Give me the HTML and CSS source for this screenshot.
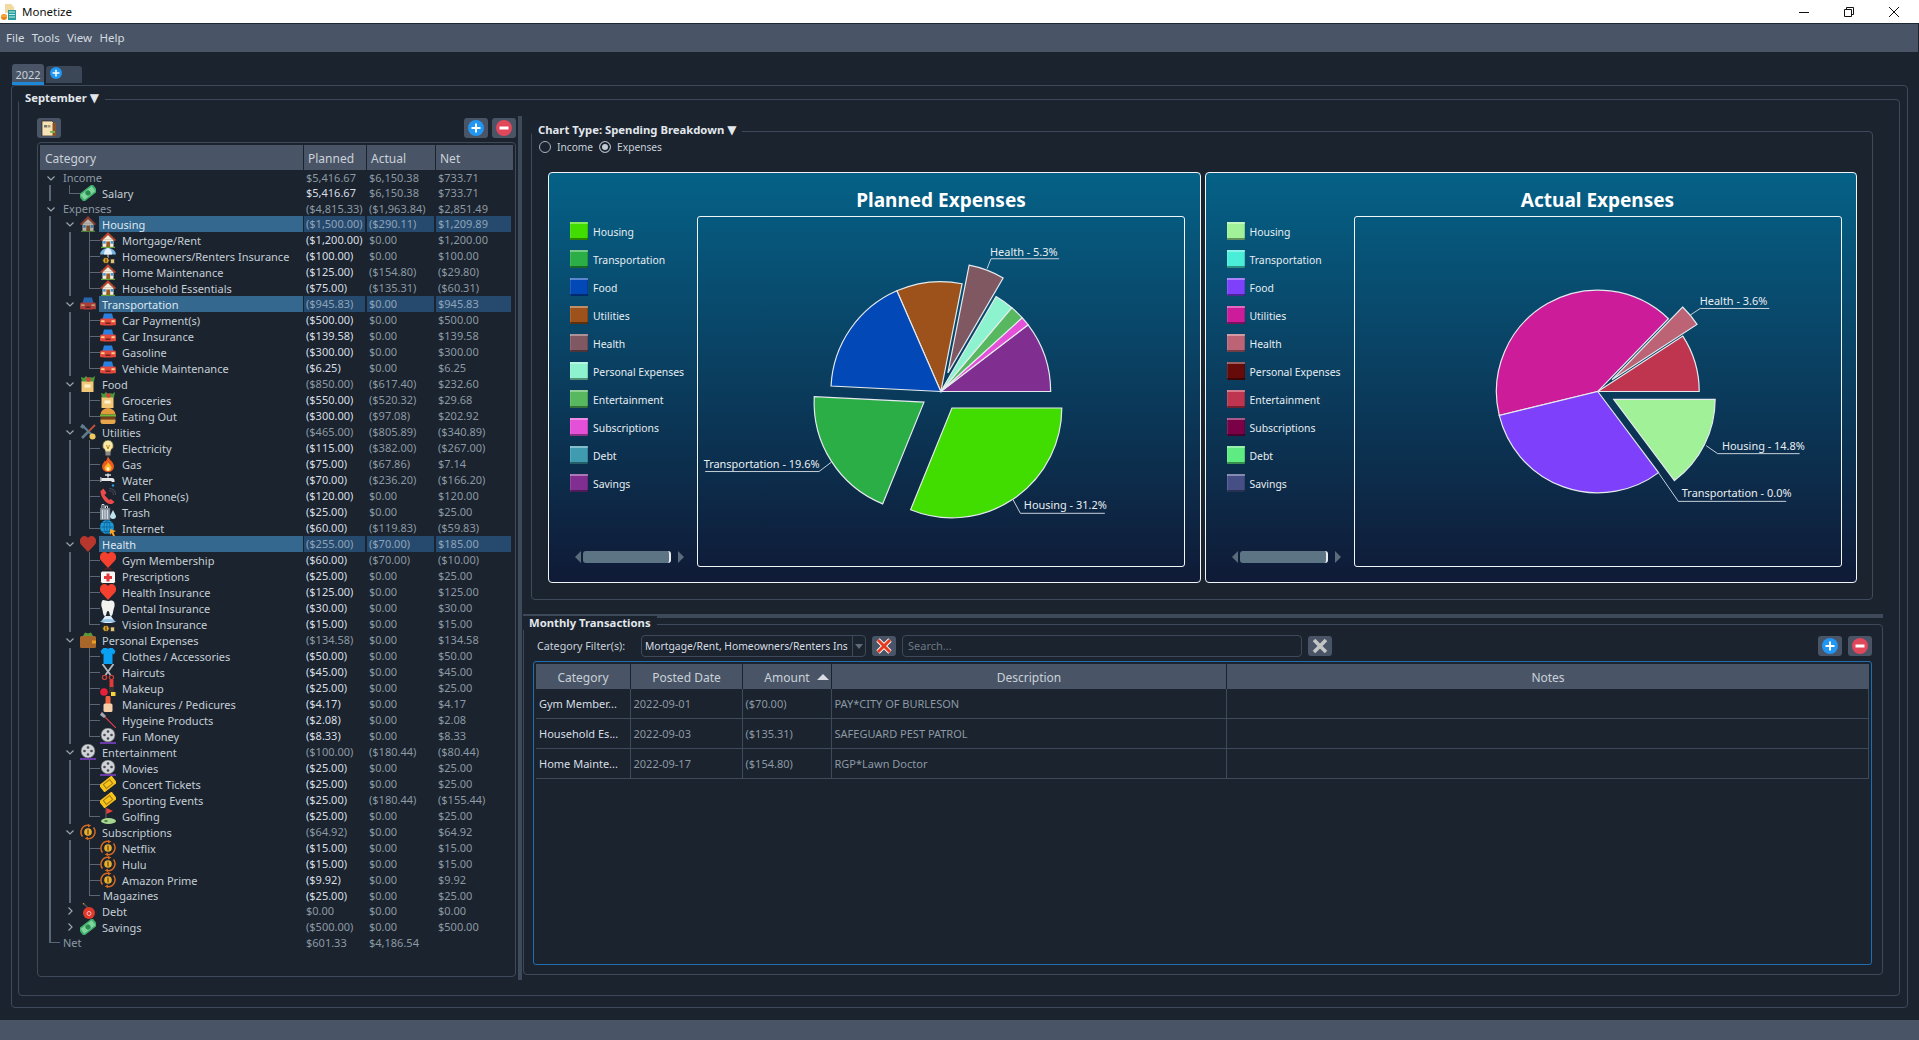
FILE: index.html
```html
<!DOCTYPE html>
<html lang="en">
<head>
<meta charset="utf-8">
<title>Monetize</title>
<link rel="stylesheet" href="styles.css">
</head>
<body>
<svg class="defs" aria-hidden="true">
  <symbol id="i-app" viewBox="0 0 16 16"><path d="M4 0h6l3 3v6H4z" fill="#f2d9a0"/><rect x="7" y="6" width="8" height="10" fill="#2a9c9c"/><path d="M8 8h6M8 10.500h6M8 13h6" stroke="#bfeeee"/><circle cx="3" cy="13" r="3" fill="#e8861c"/><rect x="0" y="11" width="6" height="2" fill="#f5a83a"/></symbol>
  <symbol id="i-file" viewBox="0 0 16 16"><path d="M1 1h10l3 3v12H1z" fill="#f6e4b8" stroke="#2a1c10" stroke-width=".7"/><rect x="11.500" y="3" width="3.500" height="13" fill="#8a5326"/><rect x="3" y="5" width="3" height="2.500" fill="#777"/><rect x="6.500" y="5" width="3" height="2.500" fill="#a89878"/><rect x="9" y="11" width="5" height="1.800" fill="#7ab648"/></symbol>
  <symbol id="i-plus" viewBox="0 0 16 16"><circle cx="8" cy="8" r="8" fill="#2196f3"/><path d="M8 3.500v9M3.500 8h9" stroke="#fff" stroke-width="2"/></symbol>
  <symbol id="i-minus" viewBox="0 0 16 16"><circle cx="8" cy="8" r="8" fill="#e0475a"/><path d="M3.500 8h9" stroke="#fff" stroke-width="3"/></symbol>
  <symbol id="i-down" viewBox="0 0 10 10"><path d="M1.500 3.500L5 7l3.500-3.500" fill="none" stroke="currentColor" stroke-width="1.200"/></symbol>
  <symbol id="i-right" viewBox="0 0 10 10"><path d="M3.500 1.500L7 5 3.500 8.500" fill="none" stroke="currentColor" stroke-width="1.200"/></symbol>
  <symbol id="i-cash" viewBox="0 0 16 16"><g transform="rotate(-38 8 8)"><rect x="-1" y="3.500" width="18" height="9" rx="1" fill="#3fae6a"/><rect x="1" y="5" width="14" height="6" fill="#7fd49c"/><circle cx="8" cy="8" r="2.600" fill="#2a8a50"/></g></symbol>
  <symbol id="i-house" viewBox="0 0 16 16"><path d="M2.500 7.500h11V16h-11z" fill="#f7ecda"/><path d="M8 0L0 8l1.300 1.200L8 3l6.700 6.200L16 8z" fill="#b8452c"/><path d="M8 3l5 4.800H3z" fill="#f7ecda"/><rect x="6.300" y="9.500" width="3.800" height="6.500" fill="#9a5a22"/><rect x="3.200" y="9" width="2.500" height="2.800" fill="#4a9ad8"/><rect x="10.600" y="9" width="2.500" height="2.800" fill="#4a9ad8"/><rect x="1" y="14.800" width="14" height="1.200" fill="#5fa03a"/></symbol>
  <symbol id="i-insure" viewBox="0 0 16 16"><path d="M0 6.500a8 6.500 0 0 1 16 0z" fill="#7ab4e0"/><path d="M4 6.500a4 6.500 0 0 1 8 0z" fill="#e6f2fb"/><path d="M8 6v5" stroke="#ddd"/><circle cx="6" cy="12.500" r="3.300" fill="#e0a82a" stroke="#222"/><path d="M6 10.500v4" stroke="#222"/><rect x="10.500" y="11" width="4" height="4.500" fill="#e0c27a" stroke="#222" stroke-width=".6"/></symbol>
  <symbol id="i-car" viewBox="0 0 16 16"><path d="M2.500 7L4 1.500h8L13.500 7z" fill="#2a80e0"/><rect x="0" y="6.500" width="16" height="7" rx="1.500" fill="#e2483e"/><rect x="1.200" y="8.300" width="3.300" height="1.800" fill="#ffd98a"/><rect x="11.500" y="8.300" width="3.300" height="1.800" fill="#ffd98a"/><rect x="5.500" y="10.500" width="5" height="1.500" fill="#7a1f1a"/><rect x=".5" y="13.500" width="3" height="1.500" fill="#222"/><rect x="12.500" y="13.500" width="3" height="1.500" fill="#222"/></symbol>
  <symbol id="i-bag" viewBox="0 0 16 16"><rect x="1.500" y="5" width="12" height="11" fill="#f2c878"/><path d="M2 5.500L1 1l3 1 2-2 2 2 3-1 1 1 3-2-1 5.500z" fill="#4e9a3a"/><circle cx="8.500" cy="3.500" r="2.200" fill="#d8413a"/><rect x="4.500" y="8.500" width="6" height="3" fill="#fff2cc"/></symbol>
  <symbol id="i-burger" viewBox="0 0 16 16"><path d="M.5 6.500a7.500 6.500 0 0 1 15 0z" fill="#e29a3a"/><rect x="0" y="6.500" width="16" height="2.200" fill="#6fb83a"/><rect x=".5" y="8.700" width="15" height="2.800" fill="#7a3f1a"/><path d="M.5 11.500h15v2a2.500 2.500 0 0 1-2.500 2.500H3a2.500 2.500 0 0 1-2.500-2.500z" fill="#e8a64a"/></symbol>
  <symbol id="i-tools" viewBox="0 0 16 16"><path d="M2 1l13 13" stroke="#5e7c8c" stroke-width="2.400"/><path d="M15 1L9 7" stroke="#c0503c" stroke-width="1.800"/><path d="M9 7l-7 7" stroke="#5e7c8c" stroke-width="2.600"/><circle cx="12.500" cy="12.500" r="3" fill="#f0c860"/><path d="M0 3l2-3 3 2-2 3z" fill="#5e7c8c"/></symbol>
  <symbol id="i-bulb" viewBox="0 0 16 16"><path d="M8 0a5.500 5.500 0 0 1 3 10v2H5v-2a5.500 5.500 0 0 1 3-10z" fill="#f7e9a8" stroke="#3a3a2a" stroke-width=".7"/><path d="M6.500 5l1.500 4 1.500-4" fill="none" stroke="#c08a20"/><rect x="5.500" y="12" width="5" height="3.500" fill="#8a8a8a"/></symbol>
  <symbol id="i-flame" viewBox="0 0 16 16"><path d="M8 0c1 4 6 6 6 10.500A6 5.500 0 0 1 2 10.500C2 8 4 7 4.500 5 6 6 7 3.500 8 0z" fill="#ee5a1c"/><path d="M8 6c.5 2 3.500 3 3.500 5.500a3.500 3.500 0 0 1-7 0C4.500 10 7 9 8 6z" fill="#fdb62c"/><ellipse cx="8" cy="13" rx="1.600" ry="2" fill="#fff6d0"/></symbol>
  <symbol id="i-tap" viewBox="0 0 16 16"><path d="M5 3h6M8 1.500v4" stroke="#ddd" stroke-width="1.500"/><path d="M0 6h12a2.500 2.500 0 0 1 2.500 2.500v1.500h-3V9H0z" fill="#e8e8e8"/><rect x="0" y="5" width="1.500" height="5" fill="#999"/><circle cx="13" cy="13.500" r="1.200" fill="#2a9ae0"/></symbol>
  <symbol id="i-phone" viewBox="0 0 16 16"><path d="M.5 3l3-2.500 3 4.500-2 2 4.500 5 2-1 3.500 3-3 2.500C6 16 .5 9 .5 3z" fill="#ea4a48"/><path d="M9 2.500a4.500 4.500 0 0 1 4.500 4.500M9 .3a6.700 6.700 0 0 1 6.700 6.700" fill="none" stroke="#445" stroke-width="1.100"/></symbol>
  <symbol id="i-trash" viewBox="0 0 16 16"><rect x="0" y="4" width="10" height="12" fill="#8d99a6" stroke="#50606e" stroke-width=".6"/><path d="M2 4V.5h2V4M5.500 4V2h2v2M2.500 6v9M5 6v9M7.500 6v9" stroke="#d8dde2"/><path d="M13 6l3 6a3 3 0 0 1-6 0z" fill="#bfe4ee"/></symbol>
  <symbol id="i-globe" viewBox="0 0 16 16"><circle cx="7" cy="7" r="7" fill="#1f9ad8"/><path d="M0 7h14M7 0v14M2 2.500h10M2 11.500h10M7 0c-4 4-4 10 0 14M7 0c4 4 4 10 0 14" fill="none" stroke="#0b5d8e" stroke-width=".7"/><path d="M10 9l6 2-2.500 1.200L15 16h-2l-1.500-3L10 15z" fill="#f7a428"/></symbol>
  <symbol id="i-heart" viewBox="0 0 16 16"><path d="M8 16L1 8.500C-1.500 5 .5 0 4.500 0 6 0 7.300.8 8 2c.7-1.200 2-2 3.500-2 4 0 6 5 3.500 8.500z" fill="#f4402e"/></symbol>
  <symbol id="i-aid" viewBox="0 0 16 16"><path d="M5 3V.8h6V3" fill="none" stroke="#6a2020"/><rect x=".5" y="3" width="15" height="12.500" rx="2" fill="#f8f8f8" stroke="#222"/><path d="M8 5.500v8M4 9.500h8" stroke="#e5383a" stroke-width="3"/></symbol>
  <symbol id="i-tooth" viewBox="0 0 16 16"><path d="M3 0c2 0 3 1 5 1s3-1 5 0c2 1 2 5 1 7-1 3-1 8-3 8s-1-5-3-5-1 5-3 5-2-5-3-8C1 6 1 1 3 0z" fill="#f2f2ee"/></symbol>
  <symbol id="i-vision" viewBox="0 0 16 16"><path d="M1 6L5 0h6l4 6-4 1H5z" fill="#d9ecf7"/><path d="M0 6a8 3 0 0 1 16 0z" fill="#7ab4e0" opacity=".7"/><circle cx="6" cy="12.500" r="3.300" fill="#e0a82a" stroke="#222"/><path d="M6 10.500v4" stroke="#222"/><rect x="10.500" y="11" width="4" height="4.500" fill="#e0c27a" stroke="#222" stroke-width=".6"/></symbol>
  <symbol id="i-wallet" viewBox="0 0 16 16"><path d="M3 4l2-3.500 3 1 3-1L13 4z" fill="#5a9a3a"/><rect x="0" y="4" width="16" height="12" rx="1.500" fill="#a8662a"/><rect x="12" y="8.500" width="4" height="3" fill="#f0a020"/></symbol>
  <symbol id="i-shirt" viewBox="0 0 16 16"><path d="M3.500 0h3c.5 1 2.500 1 3 0h3l3 3-1.500 3.500L12.500 5.500V16h-9V5.500L2 6.500.5 3z" fill="#0aa2f2"/></symbol>
  <symbol id="i-scissors" viewBox="0 0 16 16"><path d="M2.500 0l8 11M13.500 0l-8 11" stroke="#b4bac0" stroke-width="1.800"/><circle cx="4.500" cy="13.500" r="2.100" fill="none" stroke="#c8403a" stroke-width="1.300"/><circle cx="11.500" cy="13.500" r="2.100" fill="none" stroke="#c8403a" stroke-width="1.300"/></symbol>
  <symbol id="i-makeup" viewBox="0 0 16 16"><rect x="9.500" y="0" width="4" height="7" fill="#e03a3a"/><rect x="9" y="7" width="5" height="6" fill="#333"/><circle cx="4" cy="12" r="3.800" fill="#e8203a"/><rect x="11" y="12" width="4.500" height="4" fill="#f7d23a"/></symbol>
  <symbol id="i-nail" viewBox="0 0 16 16"><path d="M5.500 2a2.500 2.500 0 0 1 5 0v6h-5z" fill="#f0603a"/><rect x="3.500" y="7.500" width="9" height="8.500" rx="1.500" fill="#f7cfa8"/></symbol>
  <symbol id="i-brush" viewBox="0 0 16 16"><path d="M1 1l15 15" stroke="#d8404a" stroke-width="1.200"/><path d="M0 3l2-3 4 4-2 2z" fill="#a0a8b0"/></symbol>
  <symbol id="i-reel" viewBox="0 0 16 16"><circle cx="8" cy="7" r="7" fill="#cfd3d7" stroke="#555" stroke-width=".6"/><circle cx="8" cy="3.500" r="1.300" fill="#4a4a52"/><circle cx="8" cy="10.500" r="1.300" fill="#4a4a52"/><circle cx="4.500" cy="7" r="1.300" fill="#4a4a52"/><circle cx="11.500" cy="7" r="1.300" fill="#4a4a52"/><rect x="0" y="14" width="16" height="2" fill="#6a3aa8"/></symbol>
  <symbol id="i-ticket" viewBox="0 0 16 16"><g transform="rotate(-38 8 8)"><rect x="0" y="3.500" width="16" height="9" fill="#f7c41c"/><rect x="4" y="5.500" width="8" height="5" fill="none" stroke="#a87a10"/></g></symbol>
  <symbol id="i-golf" viewBox="0 0 16 16"><path d="M6 0v12" stroke="#666"/><path d="M6.500 0l6.500 3-6.500 3z" fill="#e8403a"/><ellipse cx="8.500" cy="13" rx="7.500" ry="3" fill="#a8d890"/><ellipse cx="6" cy="13" rx="1.800" ry=".8" fill="#2a5a2a"/></symbol>
  <symbol id="i-sub" viewBox="0 0 16 16"><path d="M2.500 12.500A7 7 0 0 1 8.500 1.200M13.500 3.500a7 7 0 0 1-6 11.300" fill="none" stroke="#d8691e" stroke-width="1.500"/><path d="M8 0l3.300 1.600L8 3.500zM8 16l-3.300-1.600L8 12.500z" fill="#d8691e"/><circle cx="8" cy="8" r="3.800" fill="#e8b030"/><rect x="7.400" y="5.500" width="1.200" height="5" fill="#6a4208"/></symbol>
  <symbol id="i-bomb" viewBox="0 0 16 16"><path d="M8 5L4 1" stroke="#555" stroke-width="1.200"/><circle cx="3.500" cy=".8" r=".8" fill="#e8a020"/><circle cx="9" cy="10" r="6" fill="#e0392c"/><circle cx="9" cy="10.500" r="2" fill="none" stroke="#f6c0b8"/></symbol>
  <symbol id="i-x" viewBox="0 0 16 16"><path d="M2 2l12 12M14 2L2 14" stroke="#fff" stroke-width="4.600"/><path d="M2 2l12 12M14 2L2 14" stroke="#e63a20" stroke-width="3"/></symbol>
  <symbol id="i-xg" viewBox="0 0 16 16"><path d="M2 2l12 12M14 2L2 14" stroke="#c4c4c4" stroke-width="3.600"/></symbol>
</svg>

<header class="titlebar">
  <svg class="app-ic"><use href="#i-app"/></svg>
  <span class="app-name">Monetize</span>
  <div class="winctl">
    <svg class="wc" viewBox="0 0 10 10"><path d="M0 5.500h10"/></svg>
    <svg class="wc" viewBox="0 0 10 10"><path d="M.5 2.500h7v7h-7zM2.500 2.500v-2h7v7h-2"/></svg>
    <svg class="wc" viewBox="0 0 10 10"><path d="M0 0l10 10M10 0L0 10"/></svg>
  </div>
</header>
<nav class="menubar"><span>File</span><span>Tools</span><span>View</span><span>Help</span></nav>

<main class="main">
  <div class="tabs">
    <div class="tab active">2022</div>
    <div class="tab add"><svg class="tab-ic"><use href="#i-plus"/></svg></div>
  </div>
  <div class="frame-outer">
    <section class="frame-month">
      <div class="caption cap-month">September <span class="tri">▼</span></div>

      <div class="left">
        <div class="toolbar">
          <button class="btn"><svg class="btn-ic"><use href="#i-file"/></svg></button>
          <span class="spring"></span>
          <button class="btn"><svg class="btn-ic"><use href="#i-plus"/></svg></button>
          <button class="btn"><svg class="btn-ic"><use href="#i-minus"/></svg></button>
        </div>
        <div class="tree">
          <div class="tree-head"><div>Category</div><div>Planned</div><div>Actual</div><div>Net</div></div>

          <div class="row root"><div class="cat"><svg class="ch"><use href="#i-down"/></svg><span>Income</span></div><div class="v">$5,416.67</div><div class="v">$6,150.38</div><div class="v">$733.71</div></div>
          <div class="row top t-salary"><div class="cat"><svg class="ic"><use href="#i-cash"/></svg><span>Salary</span></div><div class="v hi">$5,416.67</div><div class="v">$6,150.38</div><div class="v">$733.71</div></div>
          <div class="row root"><div class="cat"><svg class="ch"><use href="#i-down"/></svg><span>Expenses</span></div><div class="v">($4,815.33)</div><div class="v">($1,963.84)</div><div class="v">$2,851.49</div></div>

          <div class="row parent sel"><div class="cat"><svg class="ch"><use href="#i-down"/></svg><svg class="ic dim"><use href="#i-house"/></svg><span class="lbl">Housing</span></div><div class="v">($1,500.00)</div><div class="v">($290.11)</div><div class="v">$1,209.89</div></div>
          <div class="row child"><div class="cat"><svg class="ic"><use href="#i-house"/></svg><span>Mortgage/Rent</span></div><div class="v hi">($1,200.00)</div><div class="v">$0.00</div><div class="v">$1,200.00</div></div>
          <div class="row child"><div class="cat"><svg class="ic"><use href="#i-insure"/></svg><span>Homeowners/Renters Insurance</span></div><div class="v hi">($100.00)</div><div class="v">$0.00</div><div class="v">$100.00</div></div>
          <div class="row child"><div class="cat"><svg class="ic"><use href="#i-house"/></svg><span>Home Maintenance</span></div><div class="v hi">($125.00)</div><div class="v">($154.80)</div><div class="v">($29.80)</div></div>
          <div class="row child last"><div class="cat"><svg class="ic"><use href="#i-house"/></svg><span>Household Essentials</span></div><div class="v hi">($75.00)</div><div class="v">($135.31)</div><div class="v">($60.31)</div></div>

          <div class="row parent sel"><div class="cat"><svg class="ch"><use href="#i-down"/></svg><svg class="ic dim"><use href="#i-car"/></svg><span class="lbl">Transportation</span></div><div class="v">($945.83)</div><div class="v">$0.00</div><div class="v">$945.83</div></div>
          <div class="row child"><div class="cat"><svg class="ic"><use href="#i-car"/></svg><span>Car Payment(s)</span></div><div class="v hi">($500.00)</div><div class="v">$0.00</div><div class="v">$500.00</div></div>
          <div class="row child"><div class="cat"><svg class="ic"><use href="#i-car"/></svg><span>Car Insurance</span></div><div class="v hi">($139.58)</div><div class="v">$0.00</div><div class="v">$139.58</div></div>
          <div class="row child"><div class="cat"><svg class="ic"><use href="#i-car"/></svg><span>Gasoline</span></div><div class="v hi">($300.00)</div><div class="v">$0.00</div><div class="v">$300.00</div></div>
          <div class="row child last"><div class="cat"><svg class="ic"><use href="#i-car"/></svg><span>Vehicle Maintenance</span></div><div class="v hi">($6.25)</div><div class="v">$0.00</div><div class="v">$6.25</div></div>

          <div class="row parent"><div class="cat"><svg class="ch"><use href="#i-down"/></svg><svg class="ic"><use href="#i-bag"/></svg><span class="lbl">Food</span></div><div class="v">($850.00)</div><div class="v">($617.40)</div><div class="v">$232.60</div></div>
          <div class="row child"><div class="cat"><svg class="ic"><use href="#i-bag"/></svg><span>Groceries</span></div><div class="v hi">($550.00)</div><div class="v">($520.32)</div><div class="v">$29.68</div></div>
          <div class="row child last"><div class="cat"><svg class="ic"><use href="#i-burger"/></svg><span>Eating Out</span></div><div class="v hi">($300.00)</div><div class="v">($97.08)</div><div class="v">$202.92</div></div>

          <div class="row parent"><div class="cat"><svg class="ch"><use href="#i-down"/></svg><svg class="ic"><use href="#i-tools"/></svg><span class="lbl">Utilities</span></div><div class="v">($465.00)</div><div class="v">($805.89)</div><div class="v">($340.89)</div></div>
          <div class="row child"><div class="cat"><svg class="ic"><use href="#i-bulb"/></svg><span>Electricity</span></div><div class="v hi">($115.00)</div><div class="v">($382.00)</div><div class="v">($267.00)</div></div>
          <div class="row child"><div class="cat"><svg class="ic"><use href="#i-flame"/></svg><span>Gas</span></div><div class="v hi">($75.00)</div><div class="v">($67.86)</div><div class="v">$7.14</div></div>
          <div class="row child"><div class="cat"><svg class="ic"><use href="#i-tap"/></svg><span>Water</span></div><div class="v hi">($70.00)</div><div class="v">($236.20)</div><div class="v">($166.20)</div></div>
          <div class="row child"><div class="cat"><svg class="ic"><use href="#i-phone"/></svg><span>Cell Phone(s)</span></div><div class="v hi">($120.00)</div><div class="v">$0.00</div><div class="v">$120.00</div></div>
          <div class="row child"><div class="cat"><svg class="ic"><use href="#i-trash"/></svg><span>Trash</span></div><div class="v hi">($25.00)</div><div class="v">$0.00</div><div class="v">$25.00</div></div>
          <div class="row child last"><div class="cat"><svg class="ic"><use href="#i-globe"/></svg><span>Internet</span></div><div class="v hi">($60.00)</div><div class="v">($119.83)</div><div class="v">($59.83)</div></div>

          <div class="row parent sel"><div class="cat"><svg class="ch"><use href="#i-down"/></svg><svg class="ic dim"><use href="#i-heart"/></svg><span class="lbl">Health</span></div><div class="v">($255.00)</div><div class="v">($70.00)</div><div class="v">$185.00</div></div>
          <div class="row child"><div class="cat"><svg class="ic"><use href="#i-heart"/></svg><span>Gym Membership</span></div><div class="v hi">($60.00)</div><div class="v">($70.00)</div><div class="v">($10.00)</div></div>
          <div class="row child"><div class="cat"><svg class="ic"><use href="#i-aid"/></svg><span>Prescriptions</span></div><div class="v hi">($25.00)</div><div class="v">$0.00</div><div class="v">$25.00</div></div>
          <div class="row child"><div class="cat"><svg class="ic"><use href="#i-heart"/></svg><span>Health Insurance</span></div><div class="v hi">($125.00)</div><div class="v">$0.00</div><div class="v">$125.00</div></div>
          <div class="row child"><div class="cat"><svg class="ic"><use href="#i-tooth"/></svg><span>Dental Insurance</span></div><div class="v hi">($30.00)</div><div class="v">$0.00</div><div class="v">$30.00</div></div>
          <div class="row child last"><div class="cat"><svg class="ic"><use href="#i-vision"/></svg><span>Vision Insurance</span></div><div class="v hi">($15.00)</div><div class="v">$0.00</div><div class="v">$15.00</div></div>

          <div class="row parent"><div class="cat"><svg class="ch"><use href="#i-down"/></svg><svg class="ic"><use href="#i-wallet"/></svg><span class="lbl">Personal Expenses</span></div><div class="v">($134.58)</div><div class="v">$0.00</div><div class="v">$134.58</div></div>
          <div class="row child"><div class="cat"><svg class="ic"><use href="#i-shirt"/></svg><span>Clothes / Accessories</span></div><div class="v hi">($50.00)</div><div class="v">$0.00</div><div class="v">$50.00</div></div>
          <div class="row child"><div class="cat"><svg class="ic"><use href="#i-scissors"/></svg><span>Haircuts</span></div><div class="v hi">($45.00)</div><div class="v">$0.00</div><div class="v">$45.00</div></div>
          <div class="row child"><div class="cat"><svg class="ic"><use href="#i-makeup"/></svg><span>Makeup</span></div><div class="v hi">($25.00)</div><div class="v">$0.00</div><div class="v">$25.00</div></div>
          <div class="row child"><div class="cat"><svg class="ic"><use href="#i-nail"/></svg><span>Manicures / Pedicures</span></div><div class="v hi">($4.17)</div><div class="v">$0.00</div><div class="v">$4.17</div></div>
          <div class="row child"><div class="cat"><svg class="ic"><use href="#i-brush"/></svg><span>Hygeine Products</span></div><div class="v hi">($2.08)</div><div class="v">$0.00</div><div class="v">$2.08</div></div>
          <div class="row child last"><div class="cat"><svg class="ic"><use href="#i-reel"/></svg><span>Fun Money</span></div><div class="v hi">($8.33)</div><div class="v">$0.00</div><div class="v">$8.33</div></div>

          <div class="row parent"><div class="cat"><svg class="ch"><use href="#i-down"/></svg><svg class="ic"><use href="#i-reel"/></svg><span class="lbl">Entertainment</span></div><div class="v">($100.00)</div><div class="v">($180.44)</div><div class="v">($80.44)</div></div>
          <div class="row child"><div class="cat"><svg class="ic"><use href="#i-reel"/></svg><span>Movies</span></div><div class="v hi">($25.00)</div><div class="v">$0.00</div><div class="v">$25.00</div></div>
          <div class="row child"><div class="cat"><svg class="ic"><use href="#i-ticket"/></svg><span>Concert Tickets</span></div><div class="v hi">($25.00)</div><div class="v">$0.00</div><div class="v">$25.00</div></div>
          <div class="row child"><div class="cat"><svg class="ic"><use href="#i-ticket"/></svg><span>Sporting Events</span></div><div class="v hi">($25.00)</div><div class="v">($180.44)</div><div class="v">($155.44)</div></div>
          <div class="row child last"><div class="cat"><svg class="ic"><use href="#i-golf"/></svg><span>Golfing</span></div><div class="v hi">($25.00)</div><div class="v">$0.00</div><div class="v">$25.00</div></div>

          <div class="row parent"><div class="cat"><svg class="ch"><use href="#i-down"/></svg><svg class="ic"><use href="#i-sub"/></svg><span class="lbl">Subscriptions</span></div><div class="v">($64.92)</div><div class="v">$0.00</div><div class="v">$64.92</div></div>
          <div class="row child"><div class="cat"><svg class="ic"><use href="#i-sub"/></svg><span>Netflix</span></div><div class="v hi">($15.00)</div><div class="v">$0.00</div><div class="v">$15.00</div></div>
          <div class="row child"><div class="cat"><svg class="ic"><use href="#i-sub"/></svg><span>Hulu</span></div><div class="v hi">($15.00)</div><div class="v">$0.00</div><div class="v">$15.00</div></div>
          <div class="row child"><div class="cat"><svg class="ic"><use href="#i-sub"/></svg><span>Amazon Prime</span></div><div class="v hi">($9.92)</div><div class="v">$0.00</div><div class="v">$9.92</div></div>
          <div class="row child last bare"><div class="cat"><span>Magazines</span></div><div class="v hi">($25.00)</div><div class="v">$0.00</div><div class="v">$25.00</div></div>

          <div class="row parent"><div class="cat"><svg class="ch"><use href="#i-right"/></svg><svg class="ic"><use href="#i-bomb"/></svg><span class="lbl">Debt</span></div><div class="v">$0.00</div><div class="v">$0.00</div><div class="v">$0.00</div></div>
          <div class="row parent"><div class="cat"><svg class="ch"><use href="#i-right"/></svg><svg class="ic"><use href="#i-cash"/></svg><span class="lbl">Savings</span></div><div class="v">($500.00)</div><div class="v">$0.00</div><div class="v">$500.00</div></div>
          <div class="row root net"><div class="cat"><span>Net</span></div><div class="v">$601.33</div><div class="v">$4,186.54</div><div class="v"></div></div>
        </div>
      </div>

      <div class="split-v"></div>

      <div class="right">
        <section class="frame-chart">
          <div class="caption cap-chart">Chart Type: Spending Breakdown <span class="tri">▼</span></div>
          <div class="radios">
            <span class="radio"></span><span class="radio-text">Income</span>
            <span class="radio on"></span><span class="radio-text">Expenses</span>
          </div>
          <div class="cards">

            <article class="card">
              <div class="legend">
                <div class="lg"><span class="sw s-a1"></span>Housing</div>
                <div class="lg"><span class="sw s-a2"></span>Transportation</div>
                <div class="lg"><span class="sw s-a3"></span>Food</div>
                <div class="lg"><span class="sw s-a4"></span>Utilities</div>
                <div class="lg"><span class="sw s-a5"></span>Health</div>
                <div class="lg"><span class="sw s-a6"></span>Personal Expenses</div>
                <div class="lg"><span class="sw s-a7"></span>Entertainment</div>
                <div class="lg"><span class="sw s-a8"></span>Subscriptions</div>
                <div class="lg"><span class="sw s-a9"></span>Debt</div>
                <div class="lg"><span class="sw s-a10"></span>Savings</div>
                <div class="lscroll"><i class="arrow-l"></i><i class="thumb"></i><i class="arrow-r"></i></div>
              </div>
              <div class="plotcol">
                <h2 class="chart-title">Planned Expenses</h2>
                <svg class="plot" viewBox="-243.800 -175.500 488 351">
                  <g class="slices">
                    <path fill="#802f90" d="M0 0L87.800 -67.100A110.500 110.500 0 0 1 110.500 0Z"/>
                    <path fill="#e550d8" d="M0 0L81.800 -74.200A110.500 110.500 0 0 1 87.800 -67.100Z"/>
                    <path fill="#57b860" d="M0 0L71.400 -84.300A110.500 110.500 0 0 1 81.800 -74.200Z"/>
                    <path fill="#8df2ce" d="M0 0L55.600 -95.500A110.500 110.500 0 0 1 71.400 -84.300Z"/>
                    <path fill="#805862" d="M7.100 -18.700L28.500 -127.100A110.500 110.500 0 0 1 62.700 -114.200Z"/>
                    <path fill="#9c521a" d="M0 0L-44.200 -101.300A110.500 110.500 0 0 1 21.400 -108.400Z"/>
                    <path fill="#0348b7" d="M0 0L-110.400 -5.500A110.500 110.500 0 0 1 -44.200 -101.300Z"/>
                    <path fill="#2aae45" d="M-16.900 10.700L-58.500 113A110.500 110.500 0 0 1 -127.300 5.200Z"/>
                    <path fill="#41dc00" d="M11.200 16.600L121.700 16.600A110.500 110.500 0 0 1 -30.400 118.900Z"/>
                  </g>
                  <path class="leader" d="M46.500 -123.500L50.500 -133.500H119"/>
                  <path class="leader" d="M-237 80.500H-122.500L-110 71"/>
                  <path class="leader" d="M72.500 108.500L80 122.500H165"/>
                  <text class="plabel" x="49.500" y="-136.500">Health - 5.3%</text>
                  <text class="plabel" x="-238.500" y="76.500">Transportation - 19.6%</text>
                  <text class="plabel" x="83.500" y="118.500">Housing - 31.2%</text>
                </svg>
              </div>
            </article>

            <article class="card">
              <div class="legend">
                <div class="lg"><span class="sw s-b1"></span>Housing</div>
                <div class="lg"><span class="sw s-b2"></span>Transportation</div>
                <div class="lg"><span class="sw s-b3"></span>Food</div>
                <div class="lg"><span class="sw s-b4"></span>Utilities</div>
                <div class="lg"><span class="sw s-b5"></span>Health</div>
                <div class="lg"><span class="sw s-b6"></span>Personal Expenses</div>
                <div class="lg"><span class="sw s-b7"></span>Entertainment</div>
                <div class="lg"><span class="sw s-b8"></span>Subscriptions</div>
                <div class="lg"><span class="sw s-b9"></span>Debt</div>
                <div class="lg"><span class="sw s-b10"></span>Savings</div>
                <div class="lscroll"><i class="arrow-l"></i><i class="thumb"></i><i class="arrow-r"></i></div>
              </div>
              <div class="plotcol">
                <h2 class="chart-title">Actual Expenses</h2>
                <svg class="plot" viewBox="-243.800 -175.500 488 351">
                  <g class="slices">
                    <path fill="#bf344f" d="M0 0L85.500 -55.700A102 102 0 0 1 102 0Z"/>
                    <path fill="#bc6476" d="M14.300 -11.800L85.300 -85A102 102 0 0 1 99.800 -67.500Z"/>
                    <path fill="#cd1c9a" d="M0 0L-99.100 24.100A102 102 0 0 1 71 -73.200Z"/>
                    <path fill="#7f40fb" d="M0 0L61.100 81.600A102 102 0 0 1 -99.100 24.100Z"/>
                    <path fill="#a0f198" d="M16 8L118 8A102 102 0 0 1 77.100 89.600Z"/>
                  </g>
                  <path class="leader" d="M92.500 -76.500L103 -83.500H172.500"/>
                  <path class="leader" d="M109 54.500L120.500 62.500H203"/>
                  <path class="leader" d="M60.500 81L81 110.500H189.500"/>
                  <text class="plabel" x="102.500" y="-87.500">Health - 3.6%</text>
                  <text class="plabel" x="124.800" y="58.500">Housing - 14.8%</text>
                  <text class="plabel" x="84.500" y="106.500">Transportation - 0.0%</text>
                </svg>
              </div>
            </article>

          </div>
        </section>

        <div class="split-h"></div>

        <section class="frame-tx">
          <div class="caption cap-tx">Monthly Transactions</div>
          <div class="filter">
            <label class="filter-label">Category Filter(s):</label>
            <div class="combo"><span class="combo-text">Mortgage/Rent, Homeowners/Renters Ins</span><span class="combo-btn"><i></i></span></div>
            <button class="btn"><svg class="btn-ic"><use href="#i-x"/></svg></button>
            <div class="search">Search...</div>
            <button class="btn"><svg class="btn-ic"><use href="#i-xg"/></svg></button>
            <span class="spring"></span>
            <button class="btn"><svg class="btn-ic"><use href="#i-plus"/></svg></button>
            <button class="btn"><svg class="btn-ic"><use href="#i-minus"/></svg></button>
          </div>
          <div class="table">
            <div class="thead">
              <div>Category</div><div>Posted Date</div><div class="sorted">Amount<i class="sort"></i></div><div>Description</div><div>Notes</div>
            </div>
            <div class="tr"><div class="strong">Gym Member...</div><div>2022-09-01</div><div>($70.00)</div><div>PAY*CITY OF BURLESON</div><div></div></div>
            <div class="tr"><div class="strong">Household Es...</div><div>2022-09-03</div><div>($135.31)</div><div>SAFEGUARD PEST PATROL</div><div></div></div>
            <div class="tr"><div class="strong">Home Mainte...</div><div>2022-09-17</div><div>($154.80)</div><div>RGP*Lawn Doctor</div><div></div></div>
          </div>
        </section>
      </div>
    </section>
  </div>
</main>
<footer class="statusbar"></footer>
</body>
</html>
```

FILE: styles.css
```css
* { box-sizing: border-box; }
html, body { margin: 0; height: 1040px; }
body {
  width: 1919px;
  overflow: hidden;
  display: flex;
  flex-direction: column;
  background: #1a232e;
  color: #c9d1d9;
  font: 11px/1 "Noto Sans", "Liberation Sans", sans-serif;
}
.defs { position: absolute; width: 0; height: 0; }
button { border: 0; padding: 0; font: inherit; }

.titlebar {
  flex: none;
  height: 24px;
  background: #fff;
  border-bottom: 1px solid #1f2933;
  display: flex;
  align-items: center;
  color: #111;
  font-size: 11.500px;
  padding-left: 1px;
}
.app-ic { width: 16px; height: 16px; margin-right: 5px; }
.winctl { margin-left: auto; display: flex; gap: 35px; padding-right: 20px; }
.wc { width: 10px; height: 10px; fill: none; stroke: #111; stroke-width: 1; }

.menubar {
  flex: none;
  height: 28px;
  background: #495566;
  display: flex;
  align-items: center;
  gap: 7.300px;
  padding-left: 6px;
  color: #d5dbe1;
  font-size: 11.500px;
  border-right: 1px solid #1a232e;
}

.main { flex: none; height: 968px; padding: 12px 11px 0 11px; display: flex; flex-direction: column; }
.tabs { display: flex; height: 21px; padding-left: 1px; align-items: flex-start; gap: 2px; flex: none; }
.tab { border-radius: 3px 3px 0 0; background: #495566; }
.tab.active { width: 32px; height: 21px; border-bottom: 3px solid #1e88d8; display: flex; align-items: center; justify-content: center; color: #c9d1d9; padding-top: 2px; }
.tab.add { width: 36px; height: 17px; margin-top: 2px; background: #3b4757; padding: 1px 0 0 4px; }
.tab-ic { width: 12px; height: 12px; display: block; }

.frame-outer { flex: none; height: 923px; border: 1px solid #3e4a5a; border-radius: 4px; padding: 13px 7px 11px 6px; }
.frame-month { position: relative; height: 100%; border: 1px solid #3e4a5a; border-radius: 4px; padding: 16px 15px 15px 18px; display: flex; }
.caption { position: absolute; background: #1a232e; padding: 0 6px; font-weight: 700; color: #e2e7ec; line-height: 14px; font-size: 11.300px; white-space: nowrap; }
.tri { font: 700 12px/14px "DejaVu Sans", sans-serif; }
.cap-month { left: 0; top: -9px; }
.cap-chart { left: 0; top: -9px; }
.cap-tx { left: -1px; top: -9px; }

.left { flex: none; width: 479px; padding: 2px 0 3px; display: flex; flex-direction: column; }
.toolbar { display: flex; gap: 4px; height: 20px; margin-bottom: 4px; flex: none; }
.spring { flex: 1; }
.btn { width: 24px; height: 20px; background: #495566; border-radius: 3px; display: flex; align-items: center; justify-content: center; }
.btn-ic { width: 16px; height: 16px; }

.tree { flex: 1; border: 1px solid #3e4a5a; border-radius: 4px; padding: 2px 2px 0; }
.tree-head, .row { display: grid; grid-template-columns: 264px 63px 69px 77px; }
.tree-head { height: 25px; align-items: stretch; font-size: 12px; color: #c9d1d9; }
.tree-head > div { background: #495566; display: flex; align-items: center; padding: 2px 0 0 4px; border-right: 1px solid #1a232e; }
.tree-head > div:first-child { padding-left: 5px; }
.tree-head > div:last-child { border-right: 0; }

.row { height: 16px; align-items: stretch; color: #8d99a4; }
.row.root, .row.bare { height: 15px; }
.v { padding-left: 2px; line-height: 16px; white-space: nowrap; }
.row.root .v, .row.bare .v { line-height: 15px; }
.v.hi { color: #d8dee4; }
.cat { position: relative; display: flex; align-items: center; color: #c5ced6; white-space: nowrap; background-repeat: no-repeat; }
.ic { width: 16px; height: 16px; flex: none; margin-right: 6px; }
.ic.dim { opacity: .72; }
.ch { width: 10px; height: 10px; flex: none; color: #9aa5b0; }

.row.root .cat { padding-left: 6px; color: #8d99a4; }
.row.root .ch { margin-right: 7px; }
.row.net .cat { padding-left: 23px; background-image: linear-gradient(#5a6675, #5a6675), linear-gradient(#5a6675, #5a6675); background-position: 9px 0, 9px 7px; background-size: 2px 8px, 11px 1px; }

.row.top .cat { padding-left: 40px; background-image: linear-gradient(#5a6675, #5a6675), linear-gradient(#5a6675, #5a6675), linear-gradient(#5a6675, #5a6675); background-position: 9px 0, 29px 0, 29px 8px; background-size: 2px 100%, 1px 8px, 11px 1px; }

.row.parent .cat { padding-left: 25px; background-image: linear-gradient(#5a6675, #5a6675); background-position: 9px 0; background-size: 2px 100%; }
.row.parent .ch { margin-right: 5px; }
.row.parent .lbl { flex: 1; align-self: stretch; display: flex; align-items: center; margin-left: -3px; padding-left: 3px; margin-right: 1px; }
.row.sel .lbl { background: #34688f; color: #dde6ee; }
.row.sel .v { background: #264a6e; margin-right: 2px; color: #8ea3b8; }

.row.child .cat { padding-left: 60px; background-image: linear-gradient(#5a6675, #5a6675), linear-gradient(#5a6675, #5a6675), linear-gradient(#5a6675, #5a6675), linear-gradient(#5a6675, #5a6675); background-position: 9px 0, 29px 0, 49px 0, 49px 8px; background-size: 2px 100%, 2px 100%, 1px 100%, 11px 1px; }
.row.child.last .cat { background-size: 2px 100%, 2px 100%, 1px 8px, 11px 1px; }
.row.bare .cat { padding-left: 63px; background-position: 9px 0, 29px 0, 49px 0, 49px 7px; }

.split-v { flex: none; width: 4px; margin: 0 1px 0 2px; background: #3e4a5a; }

.right { flex: none; width: 1360px; padding: 15px 0 5px; display: flex; flex-direction: column; }
.frame-chart { position: relative; flex: none; height: 469px; margin: 0 10px 0 8px; border: 1px solid #3e4a5a; border-radius: 4px; }
.radios { display: flex; align-items: center; height: 14px; margin-top: 8px; padding-left: 7px; font-size: 10.200px; color: #c9d1d9; }
.radio { width: 12px; height: 12px; border: 1px solid #aab4be; border-radius: 50%; background: #1a232e; margin-right: 6px; }
.radio.on { border-color: #aab4be; box-shadow: inset 0 0 0 2px #1a232e; background: #c2cbd3; }
.radio-text { margin-right: 6px; }

.cards { display: flex; gap: 4px; margin: 18px 15px 0 16px; height: 411px; }
.card { flex: 1; display: flex; border: 1px solid #f2f5f7; border-radius: 4px; background: linear-gradient(#056187, #0f1a36); color: #e8eef2; }
.legend { flex: none; width: 148px; padding: 49px 0 19px 21px; display: flex; flex-direction: column; font-size: 10.400px; }
.lg { height: 28px; display: flex; align-items: flex-start; line-height: 20px; white-space: nowrap; flex: none; }
.sw { width: 18px; height: 18px; margin-right: 5px; flex: none; box-shadow: inset 0 2px rgba(255,255,255,.35), inset 0 -2px rgba(0,0,0,.4), inset 1px 0 rgba(255,255,255,.12), inset -1px 0 rgba(0,0,0,.15); }
.s-a1 { background: #41dc00; } .s-a2 { background: #2aae45; } .s-a3 { background: #0348b7; } .s-a4 { background: #9c521a; } .s-a5 { background: #805862; }
.s-a6 { background: #8df2ce; } .s-a7 { background: #57b860; } .s-a8 { background: #e550d8; } .s-a9 { background: #3f9bb0; } .s-a10 { background: #802f90; }
.s-b1 { background: #a0f198; } .s-b2 { background: #4aeed8; } .s-b3 { background: #7f40fb; } .s-b4 { background: #cd1c9a; } .s-b5 { background: #bc6476; }
.s-b6 { background: #660a0a; } .s-b7 { background: #bf344f; } .s-b8 { background: #7a0048; } .s-b9 { background: #5eec82; } .s-b10 { background: #454f86; }

.lscroll { margin: auto 0 0 5px; height: 12px; display: flex; align-items: center; flex: none; }
.thumb { width: 88px; height: 12px; margin: 0 7px 0 2px; background: #5d7485; border-radius: 3px; border-right: 2px solid #e6ecf0; }
.arrow-l, .arrow-r { width: 0; height: 0; border-top: 6px solid transparent; border-bottom: 6px solid transparent; }
.arrow-l { border-right: 6px solid #5a6b7a; }
.arrow-r { border-left: 6px solid #5a6b7a; }

.plotcol { flex: none; width: 488px; display: flex; flex-direction: column; }
.chart-title { flex: none; height: 43px; margin: 0; padding-top: 17px; font-size: 19px; line-height: 20px; font-weight: 700; text-align: center; color: #fff; }
.plot { flex: none; width: 488px; height: 351px; border: 1px solid #f2f5f7; border-radius: 3px; overflow: visible; display: block; }
.slices path { stroke: #e4ebef; stroke-width: 1.200; }
.leader { fill: none; stroke: #c8d2da; stroke-width: 1; }
.plabel { fill: #e8eef2; font-size: 11px; font-family: "Noto Sans", "Liberation Sans", sans-serif; }

.split-h { flex: none; height: 4px; margin: 14px 0 6px; background: #3e4a5a; }

.frame-tx { position: relative; flex: none; height: 351px; border: 1px solid #3e4a5a; border-radius: 4px; padding: 10px 10px 9px 9px; display: flex; flex-direction: column; }
.filter { flex: none; height: 22px; display: flex; align-items: center; gap: 6px; color: #c9d1d9; }
.filter .btn { flex: none; }
.filter-label { width: 102px; padding-left: 4px; font-size: 10.700px; flex: none; white-space: nowrap; }
.combo { width: 225px; height: 22px; border: 1px solid #3e4a5a; border-radius: 4px; display: flex; align-items: center; color: #d8dee4; flex: none; font-size: 10.300px; }
.combo-text { flex: 1; padding-left: 3px; white-space: nowrap; }
.combo-btn { width: 13px; height: 100%; border-left: 1px solid #3e4a5a; display: flex; align-items: center; justify-content: center; }
.combo-btn i { border: 4px solid transparent; border-top: 5px solid #5f6b78; border-bottom: 0; }
.search { width: 400px; height: 22px; border: 1px solid #3e4a5a; border-radius: 4px; line-height: 20px; padding-left: 5px; color: #6d7884; flex: none; }

.table { flex: 1; margin-top: 4px; border: 1px solid #1f6fb0; border-radius: 3px; padding: 2px; }
.thead, .tr { display: grid; grid-template-columns: 95px 112px 89px 395px 642px; }
.thead { height: 25px; font-size: 12px; color: #c9d1d9; }
.thead > div { background: #495566; display: flex; align-items: center; justify-content: center; border-right: 1px solid #1a232e; position: relative; padding-top: 2px; }
.thead > div:last-child { border-right: 0; }
.sort { position: absolute; right: 2px; top: 10px; border: 6px solid transparent; border-bottom: 6px solid #d8dee4; border-top: 0; }
.tr { height: 30px; color: #8d99a4; }
.tr > div { padding-left: 2.500px; line-height: 29px; border-right: 1px solid #3e4a5a; border-bottom: 1px solid #3e4a5a; white-space: nowrap; overflow: hidden; }
.tr > div.strong { color: #d8dee4; padding-left: 3px; }

.statusbar { flex: none; height: 20px; background: #495566; }
```
